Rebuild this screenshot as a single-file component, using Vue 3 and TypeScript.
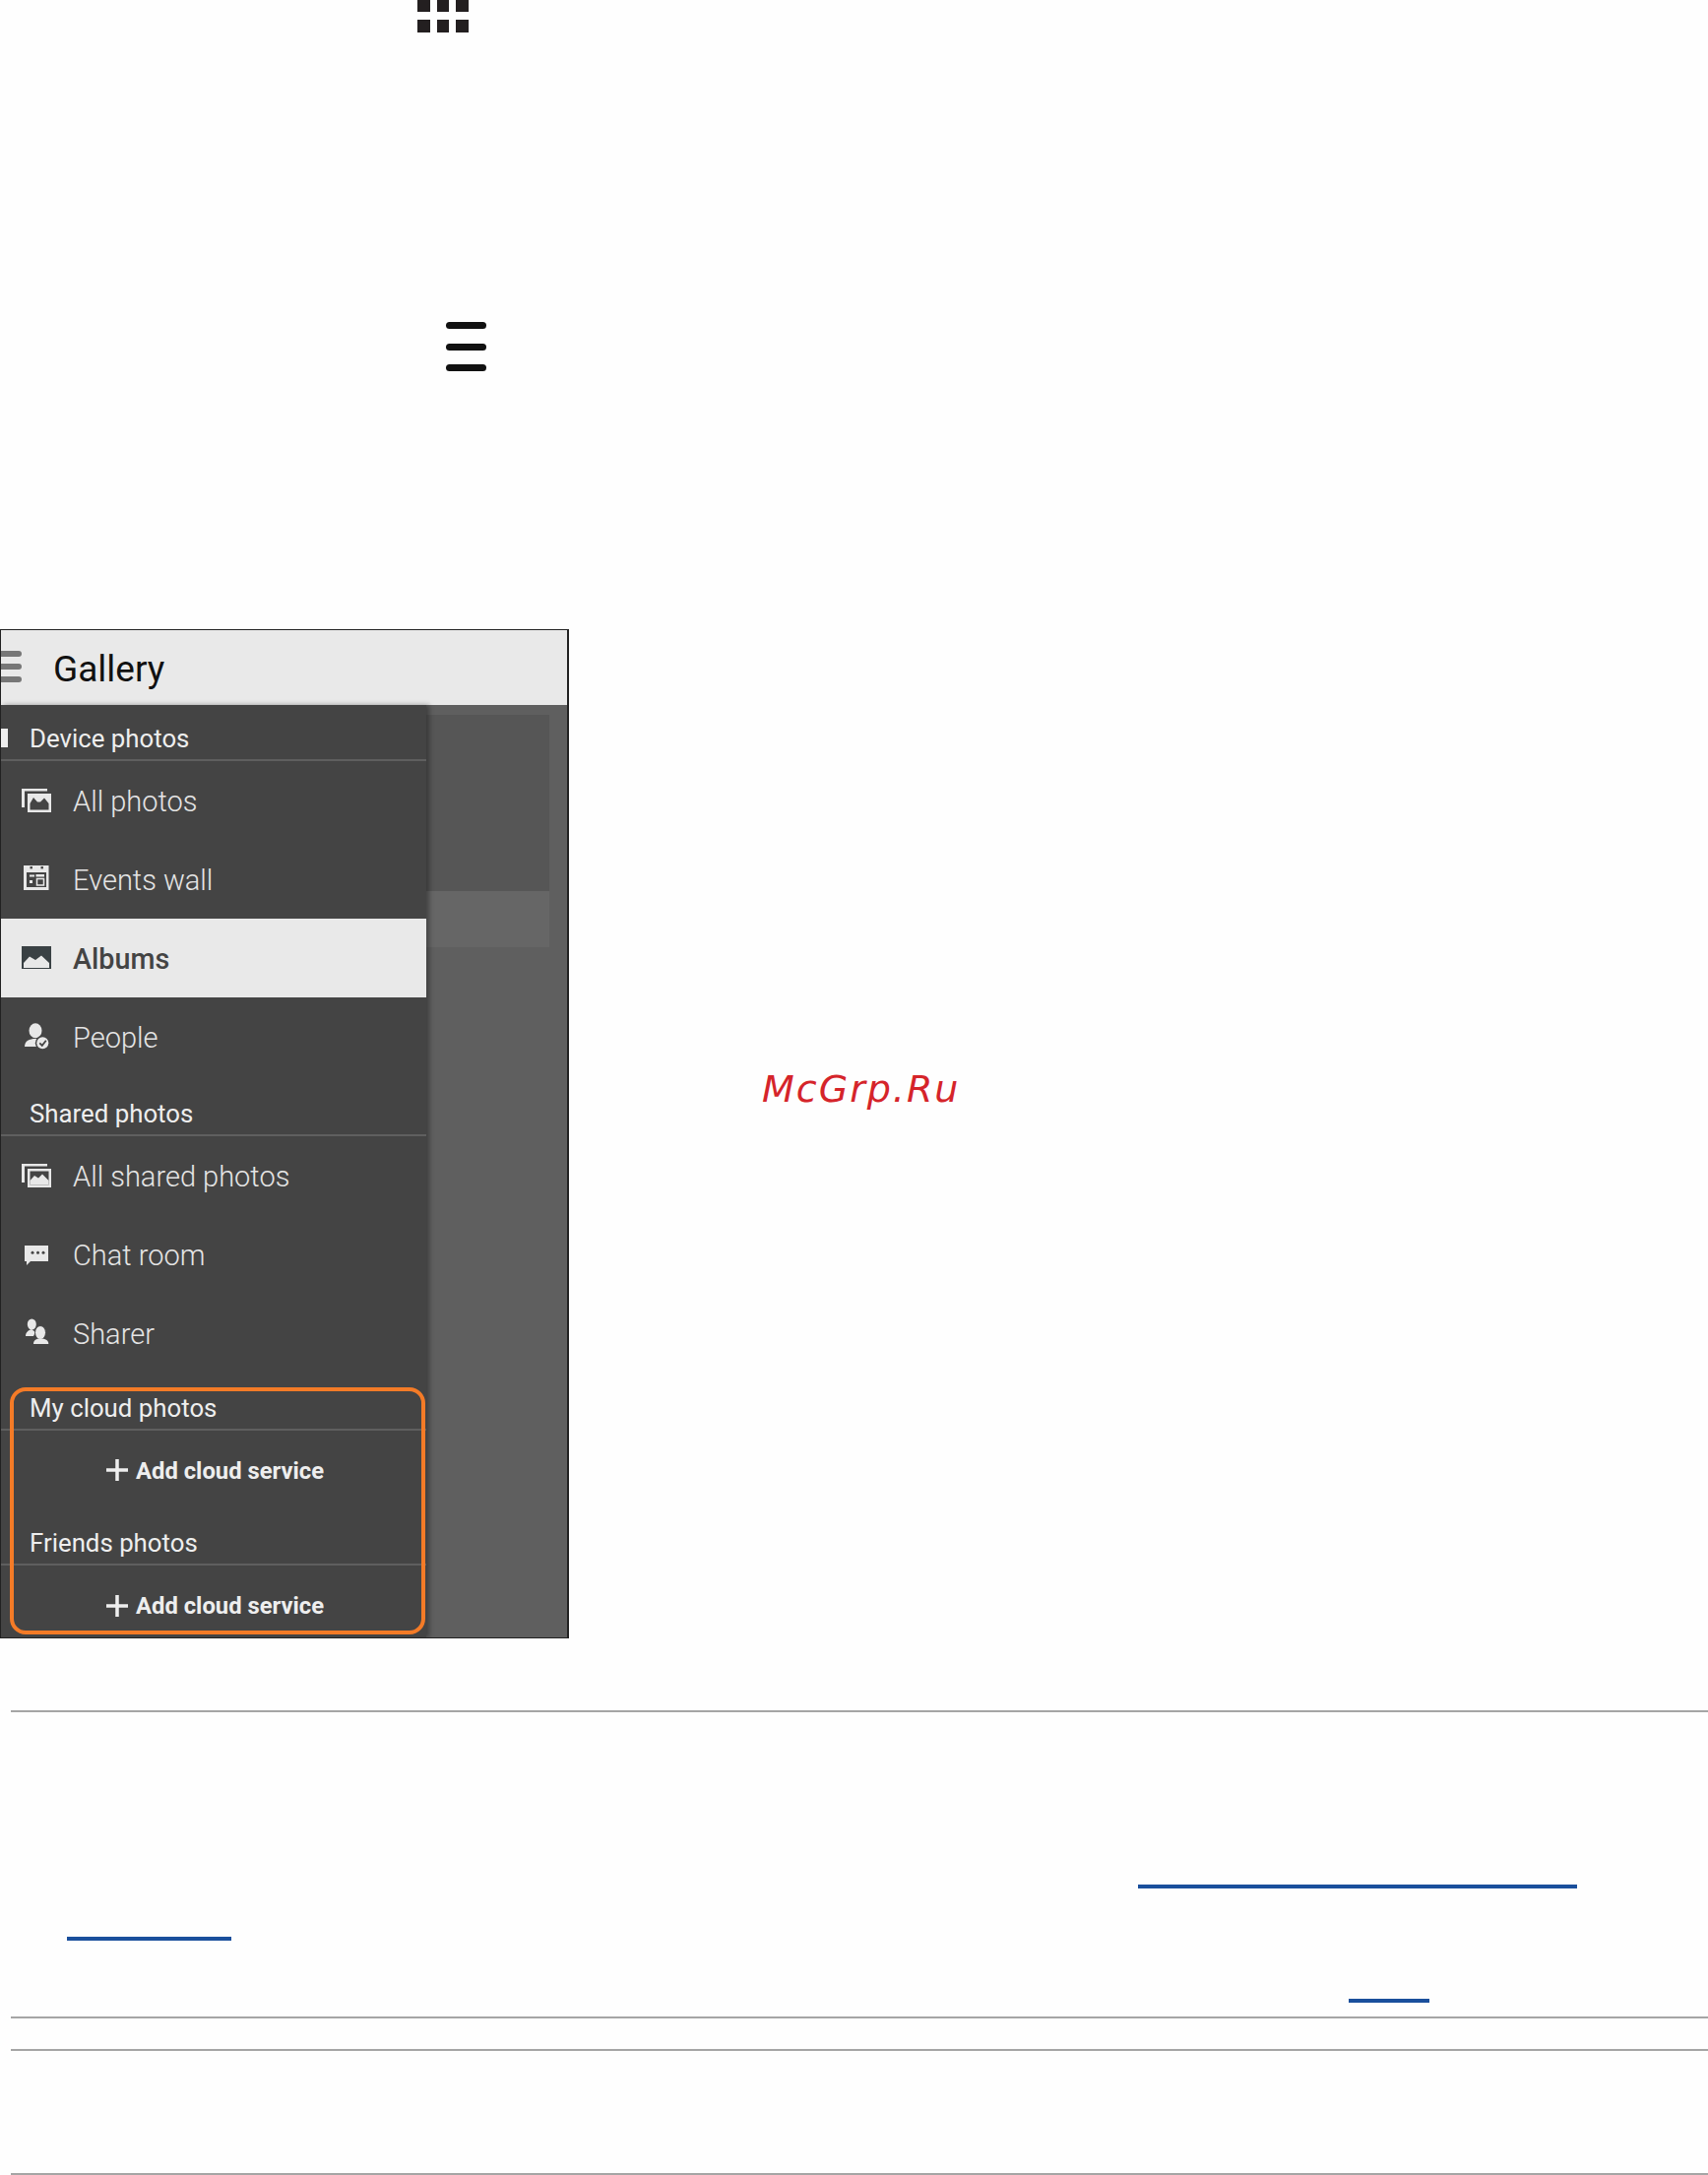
<script setup lang="ts">
type Row = { label: string; icon: string; active?: boolean }
const deviceRows: Row[] = [
  { label: 'All photos', icon: 'stack' },
  { label: 'Events wall', icon: 'calendar' },
  { label: 'Albums', icon: 'album', active: true },
  { label: 'People', icon: 'person' },
]
const sharedRows: Row[] = [
  { label: 'All shared photos', icon: 'stack' },
  { label: 'Chat room', icon: 'chat' },
  { label: 'Sharer', icon: 'sharer' },
]
const dots = [0, 1, 2, 3, 4, 5]
</script>

<template>
  <div class="page">
    <div class="grid-icon"><i v-for="d in dots" :key="d"></i></div>
    <div class="menu-icon"><i></i><i></i><i></i></div>

    <div class="figure">
      <div class="phone">
        <header class="bar">
          <div class="burger"><i></i><i></i><i></i></div>
          <span class="title">Gallery</span>
        </header>
        <div class="body">
          <nav class="drawer">
            <div class="section s-device">
              <i class="clip"></i>
              <span class="sq">Device photos</span>
            </div>
            <div v-for="r in deviceRows" :key="r.label" class="row" :class="{ active: r.active }">
              <svg class="ic" viewBox="0 0 30 30">
                <template v-if="r.icon === 'stack'">
                  <path d="M0 3H26V5.500H3V22H0Z" fill="#e8e8e8" />
                  <rect x="6" y="8" width="24" height="19" fill="#e8e8e8" />
                  <path d="M8.500 24.500V18L12 12L16 16.500L19 16.500L23 12.500L27.500 18V24.500Z" fill="#444" />
                </template>
                <template v-else-if="r.icon === 'calendar'">
                  <rect x="2" y="1" width="25.500" height="25" fill="#e8e8e8" />
                  <rect x="5" y="8" width="20" height="15" fill="#444" />
                  <rect x="8.500" y="2" width="2.400" height="2.400" fill="#444" />
                  <rect x="19.500" y="2" width="2.400" height="2.400" fill="#444" />
                  <rect x="8" y="10.500" width="5" height="2" fill="#e8e8e8" />
                  <rect x="14.500" y="10" width="8.500" height="2.500" fill="#e8e8e8" />
                  <rect x="8" y="16" width="3" height="3" fill="#e8e8e8" />
                  <rect x="15.500" y="14.500" width="7" height="6.500" fill="none" stroke="#e8e8e8" stroke-width="1.500" />
                </template>
                <template v-else-if="r.icon === 'album'">
                  <rect y="3" width="30" height="23" fill="#3a4144" />
                  <path d="M2 25V20L8 13.500L14 17L20 12.500L28 20V25Z" fill="#e8e8e8" />
                </template>
                <template v-else>
                  <ellipse cx="14" cy="8.700" rx="6.500" ry="7.500" fill="#e8e8e8" />
                  <path d="M3 25C3 19 8 17 14 17C20 17 24 18 26 22L18 25Z" fill="#e8e8e8" />
                  <circle cx="21.300" cy="21.300" r="7.500" fill="#444" />
                  <circle cx="21.300" cy="21.300" r="6" fill="#e8e8e8" />
                  <path d="M18.300 21.300L20.800 23.800L24.800 18.800" fill="none" stroke="#444" stroke-width="1.800" />
                </template>
              </svg>
              <span class="rl">{{ r.label }}</span>
            </div>

            <div class="section s-shared"><span class="sq">Shared photos</span></div>
            <div v-for="r in sharedRows" :key="r.label" class="row">
              <svg class="ic" viewBox="0 0 30 30">
                <template v-if="r.icon === 'stack'">
                  <path d="M0 3H26V5.500H3V22H0Z" fill="#e8e8e8" />
                  <rect x="6" y="8" width="24" height="19" fill="#e8e8e8" />
                  <rect x="8.500" y="10.500" width="19" height="14" fill="#444" />
                  <path d="M8.500 24.500V20L13 15L17 17.500L21 13.500L27.500 20V24.500Z" fill="#e8e8e8" />
                </template>
                <template v-else-if="r.icon === 'chat'">
                  <path d="M3 6H27V22H9L5 26V22H3Z" fill="#e8e8e8" />
                  <circle cx="11" cy="13.300" r="1.500" fill="#444" />
                  <circle cx="16.500" cy="13.300" r="1.500" fill="#444" />
                  <circle cx="22" cy="13.300" r="1.500" fill="#444" />
                </template>
                <template v-else>
                  <ellipse cx="10.300" cy="6" rx="4.500" ry="5.500" fill="#e8e8e8" />
                  <path d="M4 18C4 14 7 12 10 11L14 14L12 18Z" fill="#e8e8e8" />
                  <ellipse cx="19" cy="14.500" rx="5.500" ry="7" fill="#e8e8e8" stroke="#444" stroke-width="1" />
                  <path d="M12 26C12 22 15 20.500 19 20.500C24 20.500 27.300 22 27.300 26Z" fill="#e8e8e8" />
                </template>
              </svg>
              <span class="rl">{{ r.label }}</span>
            </div>

            <div class="outlined">
              <div class="section s-cloud"><span class="sq">My cloud photos</span></div>
              <div class="add a-one">
                <svg class="plus" viewBox="0 0 22 22"><path d="M0 11H22M11 0V22" stroke="#eee" stroke-width="3.500" /></svg>
                <span class="al">Add cloud service</span>
              </div>
              <div class="section s-friends"><span class="sq">Friends photos</span></div>
              <div class="add a-two">
                <svg class="plus" viewBox="0 0 22 22"><path d="M0 11H22M11 0V22" stroke="#eee" stroke-width="3.500" /></svg>
                <span class="al">Add cloud service</span>
              </div>
            </div>
          </nav>
          <main class="behind">
            <div class="card"></div>
            <div class="band"></div>
          </main>
        </div>
      </div>
      <div class="mark">McGrp.Ru</div>
    </div>

    <hr class="rule r1" />
    <div class="link l1"></div>
    <div class="link l2"></div>
    <div class="link l3"></div>
    <hr class="rule r2" />
    <hr class="rule r3" />
    <hr class="rule r4" />
  </div>
</template>

<style>
html, body { margin: 0; background: #fff; }
</style>

<style scoped>
.page { width: 1735px; height: 2209px; overflow: hidden; background: #fefefe; font-family: Roboto, "Liberation Sans", sans-serif; position: relative; }
.grid-icon { display: grid; grid-template-columns: 13px 12px 13px; column-gap: 7px; row-gap: 8px; margin-left: 424px; height: 33px; grid-template-rows: 12px 13px; }
.grid-icon i { background: #231f20; }
.menu-icon { margin: 294px 0 0 453px; width: 41px; height: 50px; display: flex; flex-direction: column; justify-content: space-between; }
.menu-icon i { height: 7px; border-radius: 4px; background: #111; }
.figure { display: flex; margin-top: 262px; height: 1025px; }
.phone { width: 578px; height: 1025px; box-sizing: border-box; border: 1px solid #222; border-right-width: 2px; flex: none; display: flex; flex-direction: column; overflow: hidden; background: #5f5f5f; }
.mark { margin: 443px 0 0 196px; font: italic 400 38px "DejaVu Sans", sans-serif; color: #d5242a; letter-spacing: 2px; line-height: 48px; white-space: nowrap; align-self: flex-start; }
.bar { height: 76px; background: #e9e9e9; display: flex; align-items: center; flex: none; }
.burger { width: 21px; height: 32px; display: flex; flex-direction: column; justify-content: space-between; margin-top: -2px; }
.burger i { height: 6px; background: #777; border-radius: 0 3px 3px 0; }
.title { font-size: 37px; color: #111; margin-left: 32px; padding-top: 3px; white-space: nowrap; }
.body { flex: 1; display: flex; min-height: 0; }
.drawer { width: 432px; background: #444; flex: none; position: relative; z-index: 1; box-shadow: 3px 0 5px rgba(0, 0, 0, .35); }
.section { box-sizing: content-box; border-bottom: 2px solid #5f5f5f; display: flex; align-items: flex-end; padding-left: 29px; position: relative; color: #eee; font-size: 25.800px; line-height: 30px; }
.sq { white-space: nowrap; }
.s-device { height: 55px; }
.s-shared { height: 59px; }
.s-cloud { height: 57px; }
.s-friends { height: 55px; }
.section .sq { padding-bottom: 6px; }
.clip { position: absolute; left: 0; top: 24px; width: 7px; height: 19px; background: #eee; }
.row { height: 80px; display: flex; align-items: center; padding-left: 21px; color: #e4e4e4; }
.row.active { background: #e9e9e9; color: #444; }
.ic { width: 30px; height: 30px; flex: none; }
.rl { font-size: 29px; font-weight: 300; margin-left: 22px; padding-top: 2px; white-space: nowrap; }
.active .rl { font-weight: 500; font-size: 28.700px; }
.add { display: flex; align-items: center; padding-left: 107px; color: #eee; }
.a-one { height: 80px; }
.a-two { height: 73px; padding-top: 8px; box-sizing: border-box; }
.plus { width: 22px; height: 22px; flex: none; }
.al { font-size: 23.800px; font-weight: 700; margin-left: 8px; padding-top: 1px; white-space: nowrap; }
.outlined { position: relative; }
.outlined::after { content: ""; position: absolute; left: 9px; top: 15px; width: 422px; height: 251px; box-sizing: border-box; border: 4px solid #f47b27; border-radius: 16px; }
.behind { flex: 1; padding: 10px 18px 0 0; }
.card { height: 179px; background: #565656; }
.band { height: 57px; background: #666; }
.rule { border: 0; height: 2px; background: #a5a5a5; margin: 0 0 0 11px; }
.r1 { margin-top: 73px; }
.link { height: 4px; background: #1a4f9c; }
.l1 { margin: 175px 0 0 1156px; width: 446px; }
.l2 { margin: 49px 0 0 68px; width: 167px; }
.l3 { margin: 59px 0 0 1370px; width: 82px; }
.r2 { margin-top: 14px; }
.r3 { margin-top: 31px; }
.r4 { margin-top: 124px; }
</style>
